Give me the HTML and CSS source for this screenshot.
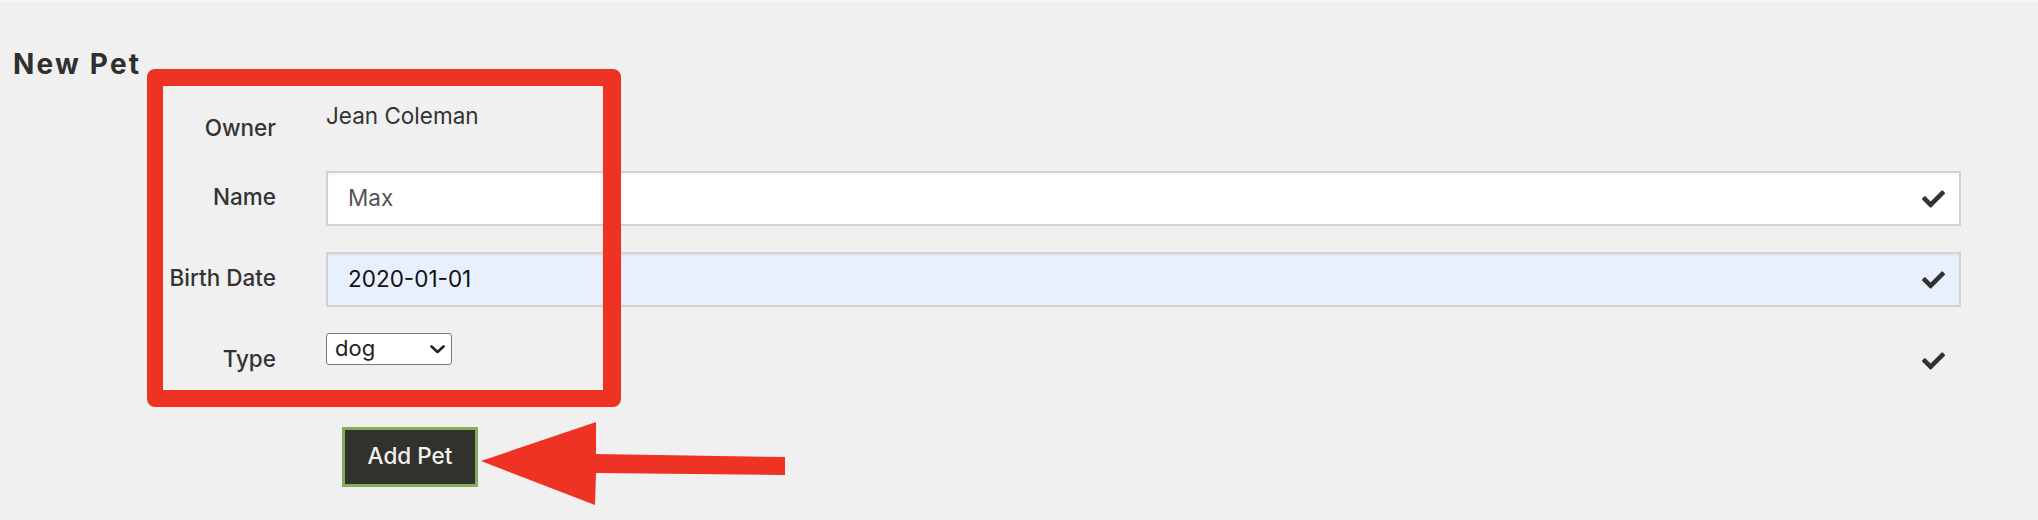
FILE: index.html
```html
<!DOCTYPE html>
<html lang="en">
<head>
<meta charset="utf-8">
<title>New Pet</title>
<link rel="stylesheet" href="styles.css">
</head>
<body>
<div class="page">
  <h2 class="title">New Pet</h2>
  <form class="pet-form">
    <div class="row owner">
      <label class="label">Owner</label>
      <div class="field"><span class="value">Jean Coleman</span></div>
    </div>
    <div class="row">
      <label class="label" for="name">Name</label>
      <div class="field">
        <input id="name" class="text-input" type="text" value="Max">
        <span class="check"><svg viewBox="0 64 512 384" width="23" height="18"><path d="M173.898 439.404l-166.4-166.4c-9.997-9.997-9.997-26.206 0-36.204l36.203-36.204c9.997-9.998 26.207-9.998 36.204 0L192 312.69 432.095 72.596c9.997-9.997 26.207-9.997 36.204 0l36.203 36.204c9.997 9.997 9.997 26.206 0 36.204l-294.4 294.401c-9.998 9.997-26.207 9.997-36.204-.001z"/></svg></span>
      </div>
    </div>
    <div class="row">
      <label class="label" for="birth">Birth Date</label>
      <div class="field">
        <input id="birth" class="text-input autofill" type="text" value="2020-01-01">
        <span class="check"><svg viewBox="0 64 512 384" width="23" height="18"><path d="M173.898 439.404l-166.4-166.4c-9.997-9.997-9.997-26.206 0-36.204l36.203-36.204c9.997-9.998 26.207-9.998 36.204 0L192 312.69 432.095 72.596c9.997-9.997 26.207-9.997 36.204 0l36.203 36.204c9.997 9.997 9.997 26.206 0 36.204l-294.4 294.401c-9.998 9.997-26.207 9.997-36.204-.001z"/></svg></span>
      </div>
    </div>
    <div class="row">
      <label class="label" for="type">Type</label>
      <div class="field">
        <div class="select-wrap">
          <select id="type" class="select"><option>dog</option><option>cat</option><option>bird</option></select>
          <svg class="chevron" viewBox="0 0 15 9" width="15" height="9"><path d="M1.5 1.5 L7.5 7 L13.5 1.5" fill="none" stroke="#222" stroke-width="2.6" stroke-linecap="round" stroke-linejoin="round"/></svg>
        </div>
        <span class="check"><svg viewBox="0 64 512 384" width="23" height="18"><path d="M173.898 439.404l-166.4-166.4c-9.997-9.997-9.997-26.206 0-36.204l36.203-36.204c9.997-9.998 26.207-9.998 36.204 0L192 312.69 432.095 72.596c9.997-9.997 26.207-9.997 36.204 0l36.203 36.204c9.997 9.997 9.997 26.206 0 36.204l-294.4 294.401c-9.998 9.997-26.207 9.997-36.204-.001z"/></svg></span>
      </div>
    </div>
    <div class="actions">
      <button class="btn" type="submit">Add Pet</button>
    </div>
  </form>
</div>
<div class="annot-box"></div>
<svg class="annot-arrow" viewBox="0 0 330 110" width="330" height="110"><polygon points="11,51 126,12 126,44 315,47 315,65 126,63 125,95" fill="#ee3224"/></svg>
</body>
</html>
```
FILE: styles.css
```css
* { box-sizing: border-box; }
html {
  background-color: #f0f0f0;
  background-image: linear-gradient(#f7f7f7, #f7f7f7);
  background-size: 100% 2px;
  background-repeat: no-repeat;
}
body {
  margin: 0;
  font-family: Inter, "Open Sans", sans-serif;
  color: #333;
}
.page {
  padding: 47px 0 0 13px;
}
.title {
  margin: 0;
  font-size: 28px;
  line-height: 34px;
  font-weight: 700;
  letter-spacing: 2.2px;
  color: #2f2f2d;
}
.pet-form {
  margin-top: 19px;
  display: flex;
  flex-direction: column;
}
.row {
  display: grid;
  grid-template-columns: 263px 1635px;
  column-gap: 50px;
  margin-bottom: 26px;
}
.row.owner {
  margin-bottom: 27px;
}
.label {
  text-align: right;
  font-size: 22.5px;
  line-height: 32px;
  padding-top: 10px;
  font-weight: 500;
}
.owner .label {
  padding-top: 12px;
}
.value {
  display: block;
  font-size: 22.5px;
  line-height: 32px;
}
.field {
  position: relative;
  min-height: 55px;
}
.owner .field {
  min-height: 0;
}
.text-input {
  display: block;
  width: 100%;
  height: 55px;
  border: 2px solid #d2d2d2;
  background: #fff;
  padding: 0 20px 3px;
  font-family: Inter, "Open Sans", sans-serif;
  font-size: 22.5px;
  color: #555;
  box-shadow: inset 0 2px 2px rgba(0, 0, 0, 0.04);
  outline: none;
  border-radius: 0;
}
.text-input.autofill {
  background: #e8f0fe;
  color: #111;
}
.select-wrap {
  position: relative;
  width: 126px;
}
.select {
  -webkit-appearance: none;
  appearance: none;
  display: block;
  width: 126px;
  height: 32px;
  border: 1px solid #7a7a7a;
  border-radius: 3px;
  background: #fff;
  font-family: Inter, "Open Sans", sans-serif;
  font-size: 22px;
  color: #222;
  padding: 0 0 2px 8px;
  outline: none;
}
.chevron {
  position: absolute;
  right: 7px;
  top: 12px;
  pointer-events: none;
}
.check {
  position: absolute;
  right: 16px;
  top: 19px;
  width: 23px;
  height: 18px;
  display: flex;
}
.check svg {
  fill: #333;
}
.actions {
  margin-top: 13px;
  padding-left: 329px;
}
.btn {
  width: 136px;
  height: 60px;
  background: #33312d;
  border: 3px solid #82ad5c;
  color: #f1f1f1;
  font-family: Inter, "Open Sans", sans-serif;
  font-size: 22.5px;
  font-weight: 500;
  padding: 0 0 4px;
  border-radius: 0;
}
.annot-box {
  position: absolute;
  left: 147px;
  top: 69px;
  width: 474px;
  height: 338px;
  border-style: solid;
  border-color: #ee3224;
  border-width: 17px 18px 17px 16px;
  border-radius: 8px;
  pointer-events: none;
}
.annot-arrow {
  position: absolute;
  left: 470px;
  top: 410px;
  pointer-events: none;
}
```
